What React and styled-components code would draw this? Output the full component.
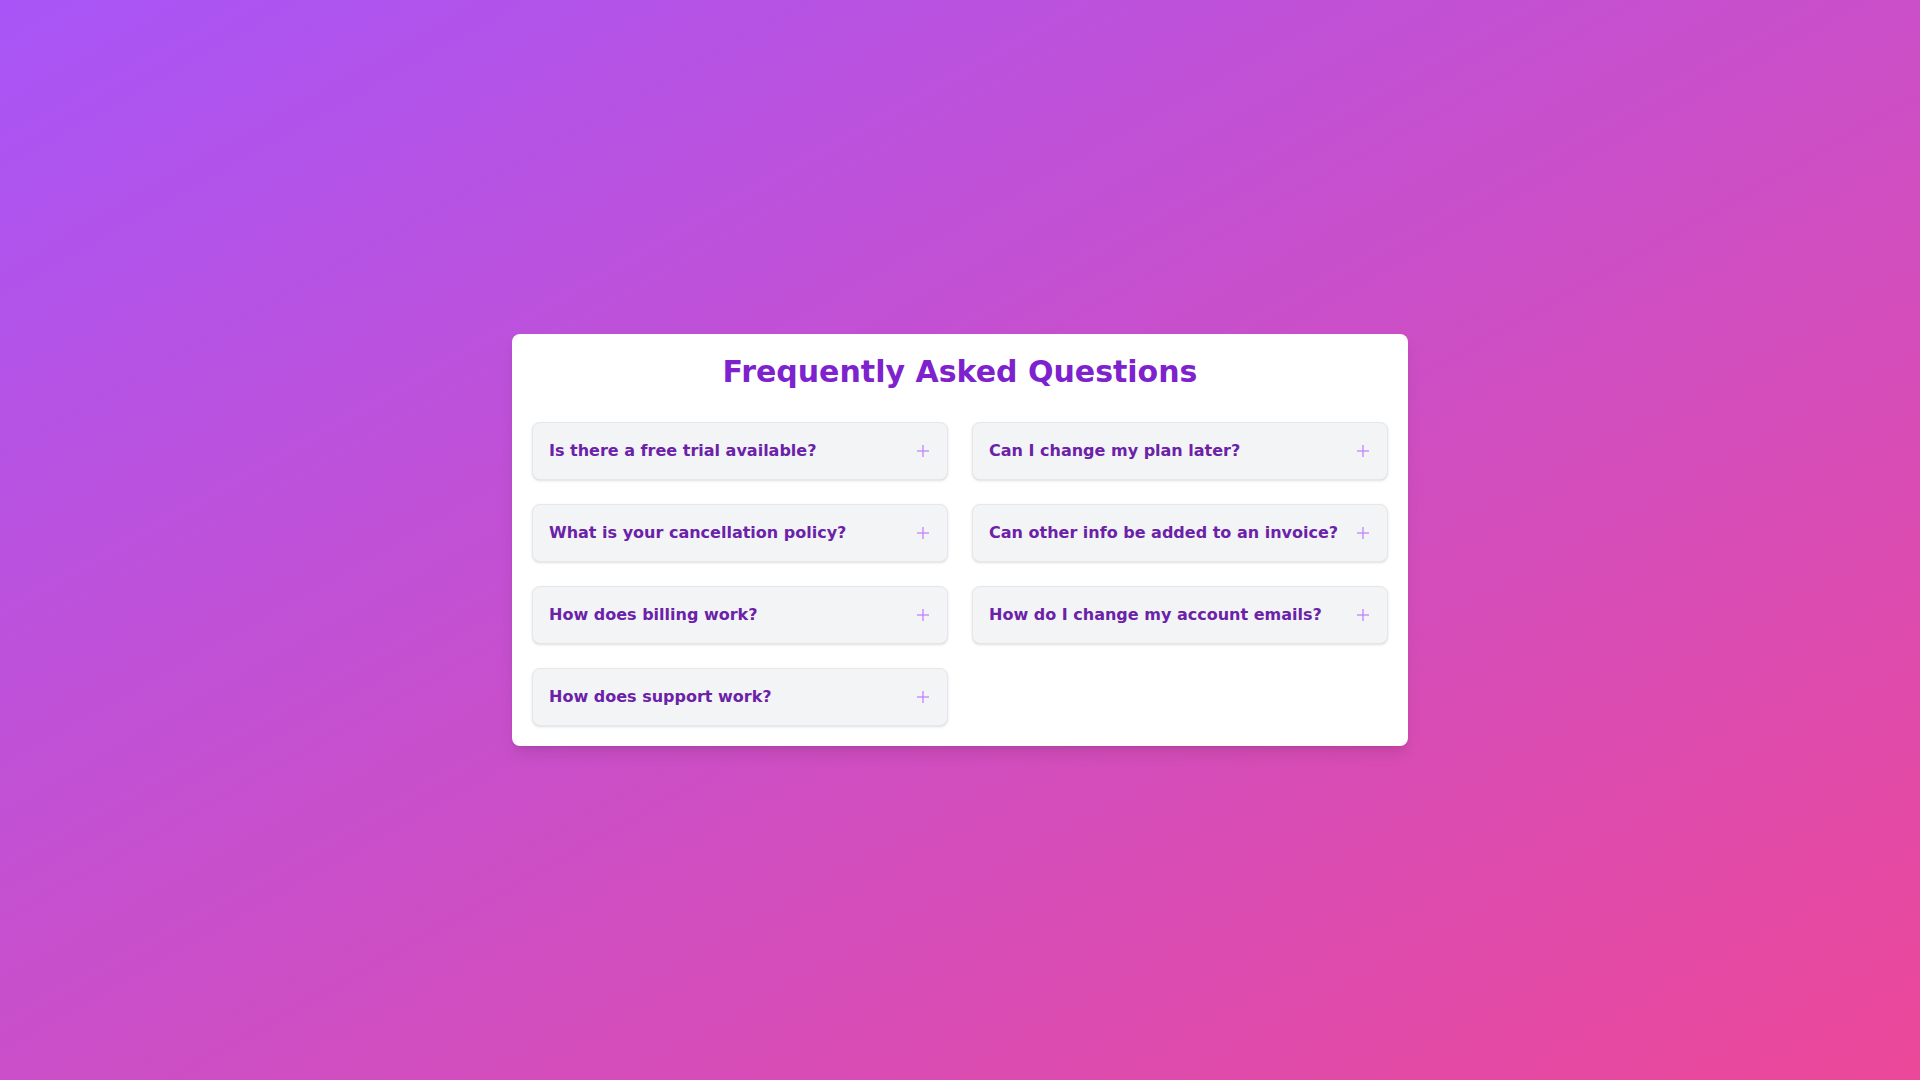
import React from "react";
import styled, { createGlobalStyle } from "styled-components";

const Global = createGlobalStyle`
  html, body { margin: 0; padding: 0; }
  body {
    font-family: "DejaVu Sans", "Liberation Sans", sans-serif;
    -webkit-font-smoothing: antialiased;
  }
  * { box-sizing: border-box; }
`;

const Page = styled.div`
  min-height: 100vh;
  display: flex;
  align-items: center;
  justify-content: center;
  background: linear-gradient(to bottom right, #a855f7, #ec4899);
`;

const Card = styled.section`
  width: 896px;
  background: #ffffff;
  border-radius: 8px;
  padding: 20px;
  box-shadow: 0 10px 15px -3px rgba(0, 0, 0, 0.1), 0 4px 6px -4px rgba(0, 0, 0, 0.1);
`;

const Title = styled.h1`
  margin: 0 0 32px;
  text-align: center;
  font-size: 30px;
  line-height: 36px;
  font-weight: 700;
  color: #7e22ce;
`;

const Grid = styled.div`
  display: grid;
  grid-template-columns: 1fr 1fr;
  gap: 24px;
  align-items: start;
`;

const Item = styled.button`
  display: flex;
  align-items: center;
  justify-content: space-between;
  width: 100%;
  padding: 16px;
  background: #f3f4f6;
  border: 1px solid #e5e7eb;
  border-radius: 8px;
  box-shadow: 0 1px 3px 0 rgba(0, 0, 0, 0.1), 0 1px 2px -1px rgba(0, 0, 0, 0.1);
  font-family: inherit;
  text-align: left;
  cursor: pointer;
`;

const Question = styled.span`
  font-size: 16px;
  line-height: 24px;
  font-weight: 700;
  color: #6b21a8;
`;

const PlusIcon = () => (
  <svg width="16" height="16" viewBox="0 0 16 16" fill="none" stroke="#c084fc" strokeWidth="1.3" strokeLinecap="butt">
    <line x1="8" y1="2" x2="8" y2="14" />
    <line x1="2" y1="8" x2="14" y2="8" />
  </svg>
);

const questions = [
  "Is there a free trial available?",
  "Can I change my plan later?",
  "What is your cancellation policy?",
  "Can other info be added to an invoice?",
  "How does billing work?",
  "How do I change my account emails?",
  "How does support work?",
];

export default function App() {
  return (
    <>
      <Global />
      <Page>
        <Card>
          <Title>Frequently Asked Questions</Title>
          <Grid>
            {questions.map((q) => (
              <Item key={q}>
                <Question>{q}</Question>
                <PlusIcon />
              </Item>
            ))}
          </Grid>
        </Card>
      </Page>
    </>
  );
}
